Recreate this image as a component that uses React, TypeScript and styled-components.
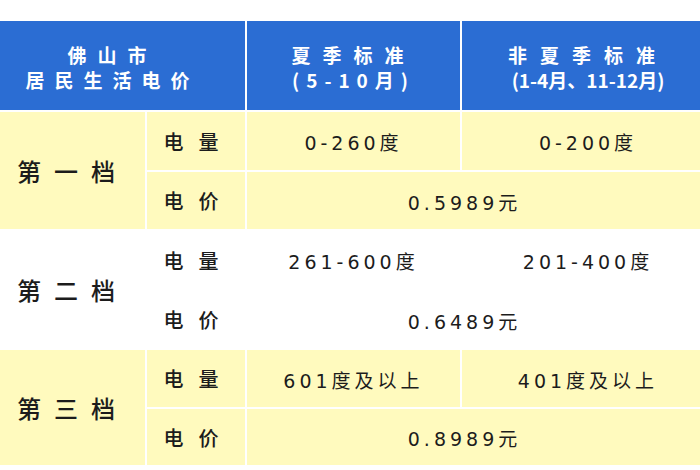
import React from "react";
import styled, { createGlobalStyle } from "styled-components";

const GlobalStyle = createGlobalStyle`
  html, body {
    margin: 0;
    padding: 0;
    background: #ffffff;
  }
  body {
    font-family: "Noto Sans CJK SC", "Noto Sans", sans-serif;
  }
`;

const BLUE = "#2b6dd3";
const YELLOW = "#fffabe";
const INK = "#1c1c1c";

const Table = styled.div`
  margin-top: 21px;
  width: 700px;
  display: grid;
  grid-template-columns: 145px 98px 213px 238px;
  grid-template-rows: 89px 58px 57px 58px 57px 57px 56px;
  gap: 2px;
  background: #ffffff;
`;

const HeadCell = styled.div<{ $span?: number; $shift?: number }>`
  grid-column: span ${(p) => p.$span ?? 1};
  background: ${BLUE};
  color: #ffffff;
  font-weight: 700;
  font-size: 19px;
  line-height: 25px;
  display: flex;
  flex-direction: column;
  align-items: center;
  justify-content: center;
  padding-top: 2px;
  padding-left: ${(p) => Math.max(0, p.$shift ?? 0)}px;
  padding-right: ${(p) => Math.max(0, -(p.$shift ?? 0))}px;
`;

const HeadLine = styled.span<{ $ls: number }>`
  letter-spacing: ${(p) => p.$ls}px;
  white-space: nowrap;
`;

const TierCell = styled.div<{ $bg: string }>`
  grid-row: span 2;
  background: ${(p) => p.$bg};
  color: ${INK};
  font-size: 24px;
  font-weight: 500;
  letter-spacing: 13px;
  display: flex;
  align-items: center;
  justify-content: center;
`;

const LabelCell = styled.div<{ $bg: string }>`
  background: ${(p) => p.$bg};
  color: ${INK};
  font-size: 20px;
  font-weight: 500;
  letter-spacing: 15px;
  display: flex;
  align-items: center;
  justify-content: center;
  padding-left: 5px;
`;

const ValueCell = styled.div<{ $bg: string; $span?: number; $shift?: number }>`
  grid-column: span ${(p) => p.$span ?? 1};
  background: ${(p) => p.$bg};
  color: ${INK};
  font-family: "DejaVu Sans", "Noto Sans CJK SC", sans-serif;
  font-size: 19px;
  letter-spacing: 4px;
  display: flex;
  align-items: center;
  justify-content: center;
  padding-top: 1px;
  padding-left: ${(p) => Math.max(0, p.$shift ?? 0)}px;
  padding-right: ${(p) => Math.max(0, -(p.$shift ?? 0))}px;
`;

type Tier = {
  name: string;
  summer: string;
  other: string;
  price: string;
  bg: string;
};

const tiers: Tier[] = [
  { name: "第一档", summer: "0-260度", other: "0-200度", price: "0.5989元", bg: YELLOW },
  { name: "第二档", summer: "261-600度", other: "201-400度", price: "0.6489元", bg: "#ffffff" },
  { name: "第三档", summer: "601度及以上", other: "401度及以上", price: "0.8989元", bg: YELLOW },
];

export default function App() {
  return (
    <>
      <GlobalStyle />
      <Table>
        <HeadCell $span={2} $shift={-20}>
          <HeadLine $ls={11}>佛山市</HeadLine>
          <HeadLine $ls={10}>居民生活电价</HeadLine>
        </HeadCell>
        <HeadCell>
          <HeadLine $ls={12}>夏季标准</HeadLine>
          <HeadLine $ls={7}>(5-10月)</HeadLine>
        </HeadCell>
        <HeadCell $shift={14}>
          <HeadLine $ls={13}>非夏季标准</HeadLine>
          <HeadLine $ls={0}>(1-4月、11-12月)</HeadLine>
        </HeadCell>

        {tiers.map((t) => (
          <React.Fragment key={t.name}>
            <TierCell $bg={t.bg}>{t.name}</TierCell>
            <LabelCell $bg={t.bg}>电量</LabelCell>
            <ValueCell $bg={t.bg}>{t.summer}</ValueCell>
            <ValueCell $bg={t.bg} $shift={14}>
              {t.other}
            </ValueCell>
            <LabelCell $bg={t.bg}>电价</LabelCell>
            <ValueCell $bg={t.bg} $span={2} $shift={-18}>
              {t.price}
            </ValueCell>
          </React.Fragment>
        ))}
      </Table>
    </>
  );
}
